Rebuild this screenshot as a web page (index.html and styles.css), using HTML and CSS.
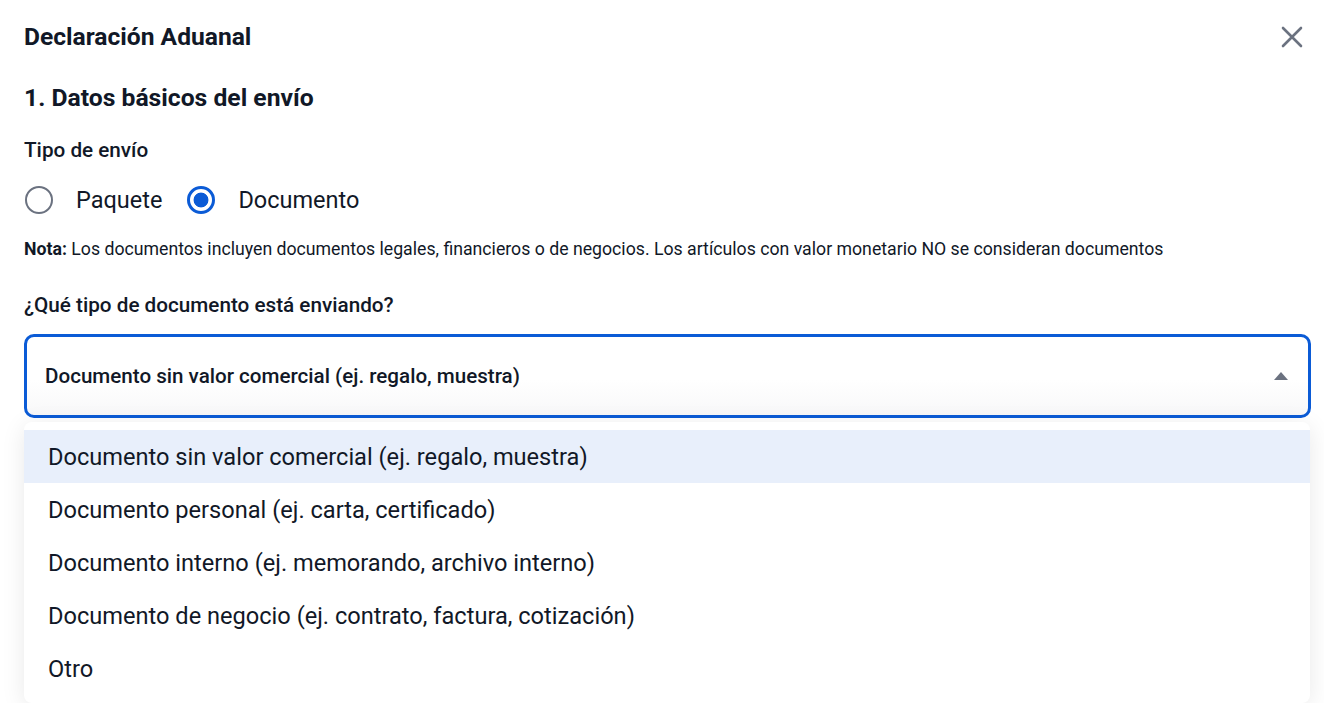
FILE: index.html
```html
<!DOCTYPE html>
<html lang="es">
<head>
<meta charset="utf-8">
<title>Declaración Aduanal</title>
<link rel="stylesheet" href="styles.css">
</head>
<body>
<div class="modal">
  <header class="modal-header">
    <h1 class="modal-title">Declaración Aduanal</h1>
    <button class="close-btn" aria-label="Cerrar">
      <svg width="24" height="24" viewBox="0 0 24 24"><path d="M3 3 L21 21 M21 3 L3 21" stroke="#6b7280" stroke-width="2.6" stroke-linecap="round" fill="none"/></svg>
    </button>
  </header>

  <h2 class="section-title">1. Datos básicos del envío</h2>

  <div class="field-label">Tipo de envío</div>
  <div class="radio-group">
    <label class="radio"><span class="radio-circle"></span><span class="radio-text">Paquete</span></label>
    <label class="radio"><span class="radio-circle checked"></span><span class="radio-text">Documento</span></label>
  </div>

  <p class="note"><strong>Nota:</strong> Los documentos incluyen documentos legales, financieros o de negocios. Los artículos con valor monetario NO se consideran documentos</p>

  <div class="field-label question">¿Qué tipo de documento está enviando?</div>

  <div class="select">
    <span class="select-value">Documento sin valor comercial (ej. regalo, muestra)</span>
    <span class="select-arrow"></span>
  </div>

  <ul class="dropdown">
    <li class="option active">Documento sin valor comercial (ej. regalo, muestra)</li>
    <li class="option">Documento personal (ej. carta, certificado)</li>
    <li class="option">Documento interno (ej. memorando, archivo interno)</li>
    <li class="option">Documento de negocio (ej. contrato, factura, cotización)</li>
    <li class="option">Otro</li>
  </ul>
</div>
</body>
</html>
```

FILE: styles.css
```css
* { box-sizing: border-box; }
html, body { margin: 0; padding: 0; background: #ffffff; }
body {
  font-family: Roboto, "Noto Sans", Arial, sans-serif;
  color: #111827;
  overflow: hidden;
}
.modal {
  padding: 23px 13px 0 24px;
}
.modal-header {
  display: flex;
  justify-content: space-between;
  align-items: center;
  height: 28px;
}
.modal-title {
  margin: 0;
  font-size: 24.6px;
  font-weight: 700;
  line-height: 28px;
}
.close-btn {
  border: 0;
  background: none;
  padding: 0;
  margin-right: 7px;
  width: 24px;
  height: 24px;
  display: flex;
}
.section-title {
  margin: 33px 0 0 0;
  font-size: 24.7px;
  font-weight: 700;
  line-height: 28px;
}
.field-label {
  margin-top: 26px;
  font-size: 20.7px;
  font-weight: 500;
  line-height: 24px;
}
.radio-group {
  display: flex;
  gap: 25px;
  margin-top: 24px;
  padding-left: 1px;
  height: 28px;
  align-items: center;
}
.radio {
  display: flex;
  align-items: center;
  gap: 23px;
}
.radio-circle {
  width: 28px;
  height: 28px;
  border-radius: 50%;
  border: 2.5px solid #6b7280;
  display: block;
}
.radio-circle.checked {
  border: 3px solid #0b5bd6;
  background: radial-gradient(circle, #0b5bd6 0 7px, #ffffff 7.8px);
}
.radio-text {
  font-size: 23.5px;
  line-height: 28px;
}
.note {
  margin: 25px 0 0 0;
  font-size: 17.7px;
  line-height: 20px;
}
.note strong { font-weight: 700; }
.question {
  margin-top: 34px;
}
.select {
  margin-top: 17px;
  height: 84px;
  border: 3px solid #0b5bd6;
  border-radius: 10px;
  display: flex;
  align-items: center;
  justify-content: space-between;
  padding: 0 20px 0 18px;
  background: linear-gradient(#ffffff 55%, #f8f8f9);
}
.select-value {
  font-size: 20.6px;
  font-weight: 500;
}
.select-arrow {
  width: 0;
  height: 0;
  border-left: 7px solid transparent;
  border-right: 7px solid transparent;
  border-bottom: 8px solid #6b7280;
}
.dropdown {
  list-style: none;
  margin: 4px 1px 0 0;
  padding: 8px 0 8px 0;
  background: #ffffff;
  border-radius: 8px;
  box-shadow: 0 4px 24px rgba(0, 0, 0, 0.09);
}
.option {
  height: 53px;
  display: flex;
  align-items: center;
  padding-left: 24px;
  font-size: 23.6px;
  color: #111827;
}
.option.active {
  background: #e8effb;
}
```
